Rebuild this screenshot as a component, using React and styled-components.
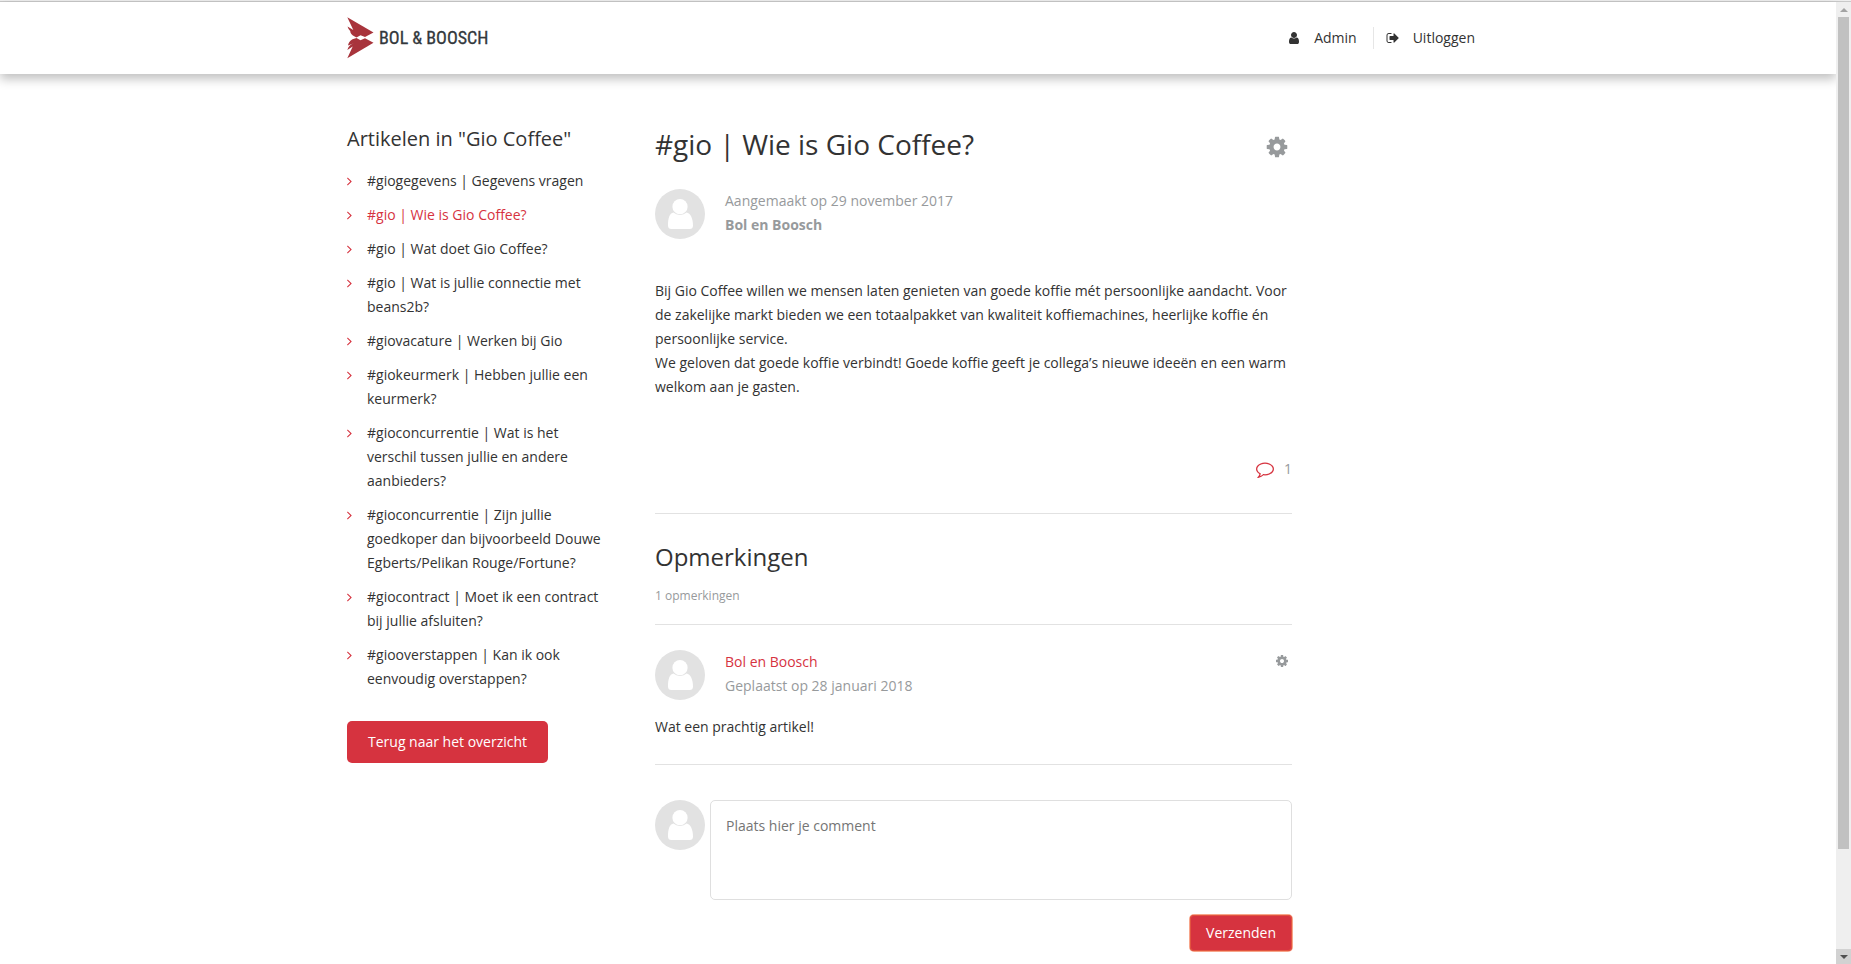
import React from "react";
import styled, { createGlobalStyle } from "styled-components";

const color = {
  text: "#333333",
  muted: "#979a9c",
  red: "#d6333f",
  line: "#e2e2e2",
};

const GlobalStyle = createGlobalStyle`
  *, *::before, *::after { box-sizing: border-box; }
  body {
    margin: 0;
    background: #fff;
    color: ${color.text};
    font: 14px/24px "Open Sans", "Noto Sans", sans-serif;
  }
  h1, h2, p, ul { margin: 0; padding: 0; font-weight: 400; }
  a { color: inherit; text-decoration: none; }
  button, textarea { font: inherit; }
`;

const WindowEdge = styled.div`
  height: 2px;
  background: #efefef;
  border-bottom: 1px solid #c9c9c9;
`;

const Shell = styled.div`
  display: flex;
  align-items: flex-start;
`;

const Page = styled.div`
  flex: 1;
  min-width: 0;
`;

const Container = styled.div`
  max-width: 1142px;
  margin: 0 auto;
`;

const Header = styled.header`
  background: #fff;
  box-shadow: 0 5px 10px rgba(0, 0, 0, 0.25);
`;

const HeaderBar = styled(Container)`
  display: flex;
  align-items: center;
  justify-content: space-between;
  height: 72px;
`;

const Brand = styled.a`
  display: flex;
  align-items: center;
  gap: 5px;
  color: #33383c;
  font: 400 18px/24px "Liberation Sans Narrow", "Roboto Condensed", "Liberation Sans", sans-serif;
  -webkit-text-stroke: 0.3px #33383c;
  white-space: nowrap;
`;

const Nav = styled.nav`
  display: flex;
  align-items: center;
  padding-right: 14px;
`;

const NavLink = styled.a`
  display: flex;
  align-items: center;
  gap: 13px;
  line-height: 22px;

  & + & {
    margin-left: 16px;
    padding-left: 12px;
    border-left: 1px solid #e6e6e6;
  }
`;

const Columns = styled(Container)`
  display: grid;
  grid-template-columns: 256px minmax(0, 637px);
  gap: 52px;
  align-items: start;
  padding: 51px 0 12px;
`;

const SideTitle = styled.h2`
  font-size: 20px;
  line-height: 28px;
  margin-bottom: 16px;
`;

const ArticleList = styled.ul`
  display: flex;
  flex-direction: column;
  gap: 10px;
  margin-bottom: 30px;
  list-style: none;
`;

const ArticleLink = styled.a`
  display: flex;
  gap: 15px;
  color: ${(p) => (p.$active ? color.red : color.text)};

  svg {
    flex: none;
    margin-top: 8px;
    color: ${color.red};
  }
`;

const ButtonLink = styled.a`
  display: inline-block;
  padding: 9px 21px;
  border-radius: 5px;
  background: ${color.red};
  color: #fff;
`;

const IconButton = styled.button`
  display: flex;
  padding: 0;
  border: 0;
  background: none;
  color: ${color.muted};
  cursor: pointer;
`;

const TitleRow = styled.div`
  display: flex;
  align-items: center;
  justify-content: space-between;
  margin-bottom: 26px;
  padding-right: 3px;

  ${IconButton} {
    margin-top: 6px;
  }
`;

const Title = styled.h1`
  font-size: 28px;
  line-height: 38px;
`;

const Author = styled.div`
  display: flex;
  align-items: flex-start;
  gap: 20px;

  ${IconButton} {
    margin: 4px 3px 0 auto;
  }
`;

const Meta = styled.p`
  color: ${color.muted};
`;

const AuthorLink = styled.a`
  color: ${color.red};
`;

const Body = styled.div`
  margin: 40px 0 58px;
`;

const CommentCount = styled.div`
  display: flex;
  align-items: center;
  justify-content: flex-end;
  gap: 10px;
  padding-bottom: 32px;
  border-bottom: 1px solid ${color.line};
  color: ${color.muted};

  svg {
    color: ${color.red};
  }
`;

const CommentsHead = styled.div`
  padding: 25px 0 16px;
  border-bottom: 1px solid ${color.line};
`;

const CommentsTitle = styled.h2`
  font-size: 24px;
  line-height: 36px;
  margin-bottom: 9px;
`;

const Small = styled.p`
  font-size: 12px;
  color: ${color.muted};
`;

const Comment = styled.article`
  padding: 25px 0;
  border-bottom: 1px solid ${color.line};
`;

const CommentText = styled.p`
  margin-top: 15px;
`;

const Form = styled.form`
  display: flex;
  flex-direction: column;
  align-items: flex-end;
  gap: 15px;
  padding-top: 35px;
`;

const Field = styled.label`
  display: flex;
  align-items: flex-start;
  align-self: stretch;
  gap: 5px;
`;

const TextArea = styled.textarea`
  flex: 1;
  min-width: 0;
  height: 100px;
  padding: 13px 15px;
  border: 1px solid #dfdfdf;
  border-radius: 5px;
  background: #fff;
  resize: none;

  &::placeholder {
    color: #757575;
  }
`;

const Submit = styled.button`
  padding: 6px 16px;
  border: 0;
  border-radius: 4px;
  background: ${color.red};
  color: #fff;
  box-shadow: 0 0 0 1px #f7a58a, inset 0 0 0 1px #e2533f;
  cursor: pointer;
`;

const Scrollbar = styled.div`
  display: flex;
  flex-direction: column;
  position: sticky;
  top: 0;
  z-index: 1;
  width: 15px;
  height: calc(100vh - 2px);
  background: #efefef;
`;

const ScrollArrow = styled.div`
  display: grid;
  place-items: center;
  height: 15px;
  background: ${(p) => (p.$shaded ? "#d2d2d2" : "transparent")};
  color: ${(p) => (p.$shaded ? "#505050" : "#a3a3a3")};
`;

const ScrollTrack = styled.div`
  display: grid;
  grid-template-rows: 25fr 3fr;
  flex: 1;
  padding: 0 2px;
`;

const ScrollThumb = styled.div`
  background: #c1c1c1;
`;

const paths = {
  user: "M1536 1399q0 109-62.5 187t-150.5 78h-854q-88 0-150.5-78t-62.5-187q0-85 8.5-160.5t31.5-152 58.5-131 94-89 134.5-34.5q131 128 313 128t313-128q76 0 134.5 34.5t94 89 58.5 131 31.5 152 8.5 160.5zm-256-887q0 159-112.5 271.5t-271.5 112.5-271.5-112.5-112.5-271.5 112.5-271.5 271.5-112.5 271.5 112.5 112.5 271.5z",
  signOut:
    "M704 1440q0 4 1 20t.5 26.5-3 23.5-10 19.5-20.5 6.5h-320q-119 0-203.5-84.5t-84.5-203.5v-704q0-119 84.5-203.5t203.5-84.5h320q13 0 22.5 9.5t9.5 22.5q0 4 1 20t.5 26.5-3 23.5-10 19.5-20.5 6.5h-320q-66 0-113 47t-47 113v704q0 66 47 113t113 47h312l11.5 1 11.5 3 8 5.5 7 9 2 13.5zm928-544q0 26-19 45l-544 544q-19 19-45 19t-45-19-19-45v-288h-448q-26 0-45-19t-19-45v-384q0-26 19-45t45-19h448v-288q0-26 19-45t45-19 45 19l544 544q19 19 19 45z",
  cog: "M1152 896q0-106-75-181t-181-75-181 75-75 181 75 181 181 75 181-75 75-181zm512-109v222q0 12-8 23t-20 13l-185 28q-19 54-39 91 35 50 107 138 10 12 10 25t-9 23q-27 37-99 108t-94 71q-12 0-26-9l-138-108q-44 23-91 38-16 136-29 186-7 28-36 28h-222q-14 0-24.5-8.5t-11.5-21.5l-28-184q-49-16-90-37l-141 107q-10 9-25 9-14 0-25-11-126-114-165-168-7-10-7-23 0-12 8-23 15-21 51-66.5t54-70.5q-27-50-41-99l-183-27q-13-2-21-12.5t-8-23.5v-222q0-12 8-23t19-13l186-28q14-46 39-92-40-57-107-138-10-12-10-24 0-10 9-23 26-36 98.5-107.5t94.5-71.5q13 0 26 10l138 107q44-23 91-38 16-136 29-186 7-28 36-28h222q14 0 24.5 8.5t11.5 21.5l28 184q49 16 90 37l142-107q9-9 24-9 13 0 25 10 129 119 165 170 7 8 7 22 0 12-8 23-15 21-51 66.5t-54 70.5q26 50 41 98l183 28q13 2 21 12.5t8 23.5z",
  comment:
    "M896 384q-204 0-381.5 69.5t-282 187.5-104.5 255q0 112 71.5 213.5t201.5 175.5l87 50-27 96q-24 91-70 172 152-63 275-171l43-38 57 6q69 8 130 8 204 0 381.5-69.5t282-187.5 104.5-255-104.5-255-282-187.5-381.5-69.5zm896 512q0 174-120 321.5t-326 233-450 85.5q-70 0-145-8-198 175-460 242-49 14-114 22h-5q-15 0-27-10.5t-16-27.5v-1q-3-4-.5-12t2-10 4.5-9.5l6-9 7-8.5 8-9q7-8 31-34.5t34.5-38 31-39.5 32.5-51 27-59 26-76q-157-89-247.5-220t-90.5-281q0-174 120-321.5t326-233 450-85.5 450 85.5 326 233 120 321.5z",
};

function Icon({ name, size = 14 }) {
  return (
    <svg width={size} height={size} viewBox="0 0 1792 1792" fill="currentColor" aria-hidden="true">
      <path d={paths[name]} />
    </svg>
  );
}

function Chevron() {
  return (
    <svg width="5" height="9" viewBox="576 384 640 1152" fill="currentColor" aria-hidden="true">
      <path d="M1171 960q0 13-10 23l-466 466q-10 10-23 10t-23-10l-50-50q-10-10-10-23t10-23l393-393-393-393q-10-10-10-23t10-23l50-50q10-10 23-10t23 10l466 466q10 10 10 23z" />
    </svg>
  );
}

function LogoMark() {
  return (
    <svg width="27" height="42" viewBox="0 0 27 42" fill="#a8343c" aria-hidden="true">
      <path d="M0.3 0.3 L26.5 15.5 L18 20 L13.5 18.2 L9.5 20.6 L7.2 19.2 Q3.5 17.5 3.2 14 L7.5 16.5 Q2 14.5 0.5 9.5 L6.3 13 Z" />
      <path d="M0.3 41.2 L26.5 25.7 L18 21.2 L13.5 23.2 L9.5 21 L5.5 22.2 Q1.5 24.5 1 28.5 L7 26.2 Q2 27.5 0.3 33 L5.7 29.5 Z" />
    </svg>
  );
}

const AvatarSvg = styled.svg`
  flex: none;
  display: block;
`;

function Avatar() {
  return (
    <AvatarSvg width="50" height="50" viewBox="0 0 50 50" aria-hidden="true">
      <circle cx="25" cy="25" r="25" fill="#e2e2e2" />
      <path
        d="M18.5 23.6 Q21 26 25 26 Q29 26 31.5 23.6 C35.5 24.2 38 29.5 38 36.5 Q38 40 34.5 40 H16.5 Q13 40 13 36.5 C13 29.5 14.5 24.2 18.5 23.6 Z"
        fill="#fff"
      />
      <circle cx="25" cy="17.7" r="7.6" fill="#fff" />
    </AvatarSvg>
  );
}

function ScrollTriangle({ down }) {
  return (
    <svg width="8" height="4" viewBox="0 0 8 4" fill="currentColor" aria-hidden="true">
      <path d={down ? "M0 0H8L4 4Z" : "M0 4H8L4 0Z"} />
    </svg>
  );
}

const articles = [
  "#giogegevens | Gegevens vragen",
  "#gio | Wie is Gio Coffee?",
  "#gio | Wat doet Gio Coffee?",
  "#gio | Wat is jullie connectie met beans2b?",
  "#giovacature | Werken bij Gio",
  "#giokeurmerk | Hebben jullie een keurmerk?",
  "#gioconcurrentie | Wat is het verschil tussen jullie en andere aanbieders?",
  "#gioconcurrentie | Zijn jullie goedkoper dan bijvoorbeeld Douwe Egberts/Pelikan Rouge/Fortune?",
  "#giocontract | Moet ik een contract bij jullie afsluiten?",
  "#giooverstappen | Kan ik ook eenvoudig overstappen?",
];

export default function App() {
  return (
    <>
      <GlobalStyle />
      <WindowEdge />
      <Shell>
        <Page>
          <Header>
            <HeaderBar>
              <Brand href="#">
                <LogoMark />
                BOL &amp; BOOSCH
              </Brand>
              <Nav>
                <NavLink href="#">
                  <Icon name="user" />
                  Admin
                </NavLink>
                <NavLink href="#">
                  <Icon name="signOut" />
                  Uitloggen
                </NavLink>
              </Nav>
            </HeaderBar>
          </Header>

          <Columns>
            <aside>
              <SideTitle>Artikelen in "Gio Coffee"</SideTitle>
              <ArticleList>
                {articles.map((title, i) => (
                  <li key={title}>
                    <ArticleLink href="#" $active={i === 1}>
                      <Chevron />
                      <span>{title}</span>
                    </ArticleLink>
                  </li>
                ))}
              </ArticleList>
              <ButtonLink href="#">Terug naar het overzicht</ButtonLink>
            </aside>

            <main>
              <TitleRow>
                <Title>#gio | Wie is Gio Coffee?</Title>
                <IconButton type="button" aria-label="Artikel instellingen">
                  <Icon name="cog" size={24} />
                </IconButton>
              </TitleRow>
              <Author>
                <Avatar />
                <Meta>
                  Aangemaakt op 29 november 2017
                  <br />
                  <strong>Bol en Boosch</strong>
                </Meta>
              </Author>
              <Body>
                <p>
                  Bij Gio Coffee willen we mensen laten genieten van goede koffie mét persoonlijke
                  aandacht. Voor de zakelijke markt bieden we een totaalpakket van kwaliteit
                  koffiemachines, heerlijke koffie én persoonlijke service.
                </p>
                <p>
                  We geloven dat goede koffie verbindt! Goede koffie geeft je collega’s nieuwe ideeën
                  en een warm welkom aan je gasten.
                </p>
              </Body>
              <CommentCount>
                <Icon name="comment" size={18} />
                <span>1</span>
              </CommentCount>

              <section>
                <CommentsHead>
                  <CommentsTitle>Opmerkingen</CommentsTitle>
                  <Small>1 opmerkingen</Small>
                </CommentsHead>
                <Comment>
                  <Author>
                    <Avatar />
                    <Meta>
                      <AuthorLink href="#">Bol en Boosch</AuthorLink>
                      <br />
                      Geplaatst op 28 januari 2018
                    </Meta>
                    <IconButton type="button" aria-label="Opmerking instellingen">
                      <Icon name="cog" size={14} />
                    </IconButton>
                  </Author>
                  <CommentText>Wat een prachtig artikel!</CommentText>
                </Comment>
                <Form onSubmit={(e) => e.preventDefault()}>
                  <Field>
                    <Avatar />
                    <TextArea aria-label="Opmerking" placeholder="Plaats hier je comment" />
                  </Field>
                  <Submit type="submit">Verzenden</Submit>
                </Form>
              </section>
            </main>
          </Columns>
        </Page>

        <Scrollbar aria-hidden="true">
          <ScrollArrow>
            <ScrollTriangle />
          </ScrollArrow>
          <ScrollTrack>
            <ScrollThumb />
          </ScrollTrack>
          <ScrollArrow $shaded>
            <ScrollTriangle down />
          </ScrollArrow>
        </Scrollbar>
      </Shell>
    </>
  );
}
